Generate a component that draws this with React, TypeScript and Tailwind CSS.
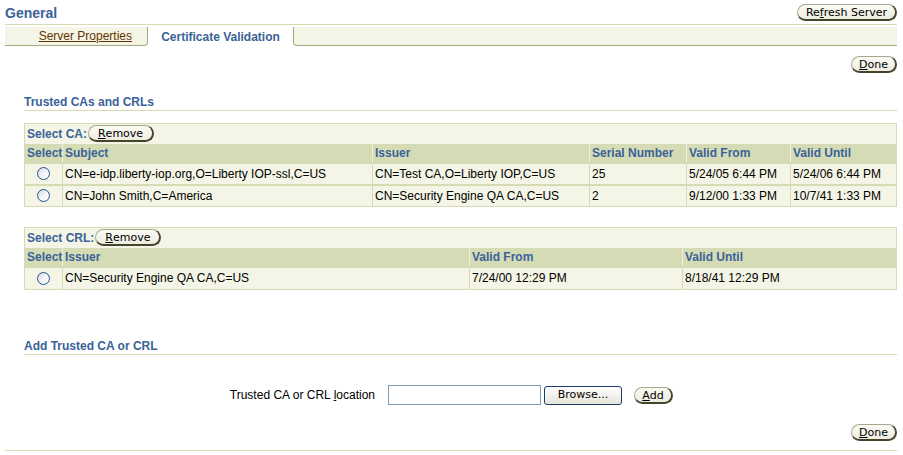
import type { ReactNode } from 'react';

const HEAD = 'text-[#3a6298]';

function Btn({ children, w, h = 'h-[17px]' }: { children: ReactNode; w: string; h?: string }) {
  return (
    <span
      className={`inline-flex items-center justify-center ${w} ${h} rounded-full border border-[#a8a890] border-r-[#45452c] border-b-[#45452c] border-r-[2px] border-b-[2px] bg-gradient-to-b from-[#fbfbf4] to-[#ecece0] font-['DejaVu_Sans',Verdana,sans-serif] text-[11px] leading-none text-black`}
    >
      {children}
    </span>
  );
}

function Radio() {
  return (
    <span className="inline-block h-[13px] w-[13px] rounded-full border border-[#24508a] bg-gradient-to-br from-[#d6d9e0] via-[#f2f3f6] to-white" />
  );
}

function SectionTitle({ children }: { children: ReactNode }) {
  return (
    <div className="border-b border-[#d8dbb0] pb-[1px]">
      <h2 className={`text-[12px] font-bold leading-[14px] ${HEAD}`}>{children}</h2>
    </div>
  );
}

const caRows = [
  {
    subject: 'CN=e-idp.liberty-iop.org,O=Liberty IOP-ssl,C=US',
    issuer: 'CN=Test CA,O=Liberty IOP,C=US',
    serial: '25',
    from: '5/24/05 6:44 PM',
    until: '5/24/06 6:44 PM',
  },
  {
    subject: 'CN=John Smith,C=America',
    issuer: 'CN=Security Engine QA CA,C=US',
    serial: '2',
    from: '9/12/00 1:33 PM',
    until: '10/7/41 1:33 PM',
  },
];

const crlRows = [
  { issuer: 'CN=Security Engine QA CA,C=US', from: '7/24/00 12:29 PM', until: '8/18/41 12:29 PM' },
];

const th = `border-l border-[#eef0dc] px-[2px] text-left align-middle text-[12px] font-bold whitespace-nowrap ${HEAD}`;
const td = 'border-l border-t-2 border-[#d5dcb5] px-[2px] align-middle text-[12px] text-black whitespace-nowrap';

export default function App() {
  return (
    <div className="relative h-[455px] w-[903px] overflow-hidden bg-white font-['Liberation_Sans',Arial,sans-serif] text-[12px] text-black">
      {/* page header */}
      <div className="flex items-start justify-between pl-[5px] pr-[6px] pt-[4px]">
        <h1 className={`mt-[1px] text-[14px] font-bold leading-[17px] ${HEAD}`}>General</h1>
        <Btn w="w-[100px]">
          Re<u>f</u>resh Server
        </Btn>
      </div>
      <div className="mx-[5px] mt-[2px] mr-[6px] border-t border-[#d8dbb0]" />

      {/* tabs */}
      <div className="mx-[5px] mr-[6px] mt-[2px] flex h-[19px]">
        <div className="flex w-[143px] items-center justify-end rounded-br-[4px] border-r border-b border-[#a8a880] bg-[#f4f5e6] pr-[15px]">
          <span className="text-[12px] text-[#663300] underline">Server Properties</span>
        </div>
        <div className="flex w-[145px] items-center justify-center bg-white">
          <span className={`text-[12px] font-bold ${HEAD}`}>Certificate Validation</span>
        </div>
        <div className="flex-1 rounded-bl-[4px] border-l border-b border-[#a8a880] bg-[#f4f5e6]" />
      </div>

      <div className="mt-[10px] flex justify-end pr-[6px]">
        <Btn w="w-[46px]">
          <u>D</u>one
        </Btn>
      </div>

      {/* trusted CAs */}
      <div className="ml-[24px] mr-[6px] mt-[22px]">
        <SectionTitle>Trusted CAs and CRLs</SectionTitle>

        <table className="mt-[12px] w-full table-fixed border-collapse border border-[#d5dcb5] bg-[#f4f5e6]">
          <colgroup>
            <col className="w-[38px]" />
            <col className="w-[310px]" />
            <col className="w-[217px]" />
            <col className="w-[97px]" />
            <col className="w-[104px]" />
            <col />
          </colgroup>
          <tbody>
            <tr className="h-[20px]">
              <td colSpan={6} className="px-[2px] align-middle">
                <div className="flex items-center gap-[1px]">
                  <span className={`text-[12px] font-bold ${HEAD}`}>Select CA:</span>
                  <Btn w="w-[66px]">
                    <u>R</u>emove
                  </Btn>
                </div>
              </td>
            </tr>
            <tr className="h-[19px] bg-[#d5dcb5]">
              <th className={`${th} border-l-0 px-0`}>Select</th>
              <th className={th}>Subject</th>
              <th className={th}>Issuer</th>
              <th className={th}>Serial Number</th>
              <th className={th}>Valid From</th>
              <th className={th}>Valid Until</th>
            </tr>
            {caRows.map((r) => (
              <tr key={r.subject} className="h-[22px]">
                <td className={`${td} border-l-0`}>
                  <span className="flex justify-center">
                    <Radio />
                  </span>
                </td>
                <td className={td}>{r.subject}</td>
                <td className={td}>{r.issuer}</td>
                <td className={td}>{r.serial}</td>
                <td className={td}>{r.from}</td>
                <td className={td}>{r.until}</td>
              </tr>
            ))}
          </tbody>
        </table>

        <table className="mt-[20px] w-full table-fixed border-collapse border border-[#d5dcb5] bg-[#f4f5e6]">
          <colgroup>
            <col className="w-[38px]" />
            <col className="w-[407px]" />
            <col className="w-[213px]" />
            <col />
          </colgroup>
          <tbody>
            <tr className="h-[20px]">
              <td colSpan={4} className="px-[2px] align-middle">
                <div className="flex items-center gap-[1px]">
                  <span className={`text-[12px] font-bold ${HEAD}`}>Select CRL:</span>
                  <Btn w="w-[66px]">
                    <u>R</u>emove
                  </Btn>
                </div>
              </td>
            </tr>
            <tr className="h-[18px] bg-[#d5dcb5]">
              <th className={`${th} border-l-0 px-0`}>Select</th>
              <th className={th}>Issuer</th>
              <th className={th}>Valid From</th>
              <th className={th}>Valid Until</th>
            </tr>
            {crlRows.map((r) => (
              <tr key={r.issuer} className="h-[23px]">
                <td className={`${td} border-l-0`}>
                  <span className="flex justify-center">
                    <Radio />
                  </span>
                </td>
                <td className={td}>{r.issuer}</td>
                <td className={td}>{r.from}</td>
                <td className={td}>{r.until}</td>
              </tr>
            ))}
          </tbody>
        </table>

        {/* add trusted CA */}
        <div className="mt-[49px]">
          <SectionTitle>Add Trusted CA or CRL</SectionTitle>
        </div>

        <div className="mt-[30px] flex items-center">
          <label className="w-[351px] text-right text-[12px]">
            Trusted CA or CRL <u>l</u>ocation
          </label>
          <input
            type="text"
            className="ml-[13px] h-[20px] w-[153px] border border-[#7f9db9] bg-white outline-none"
          />
          <span className="ml-[3px] inline-flex h-[19px] w-[78px] items-center justify-center rounded-[3px] border border-[#1c3c6c] bg-gradient-to-b from-white to-[#e6e4d8] font-['DejaVu_Sans',Verdana,sans-serif] text-[11px] text-black">
            Browse...
          </span>
          <span className="ml-[12px]">
            <Btn w="w-[39px]">
              <u>A</u>dd
            </Btn>
          </span>
        </div>
      </div>

      <div className="mt-[19px] flex justify-end pr-[6px]">
        <Btn w="w-[46px]">
          <u>D</u>one
        </Btn>
      </div>
      <div className="ml-[5px] mr-[6px] mt-[9px] border-t border-[#d8dbb0]" />
    </div>
  );
}
